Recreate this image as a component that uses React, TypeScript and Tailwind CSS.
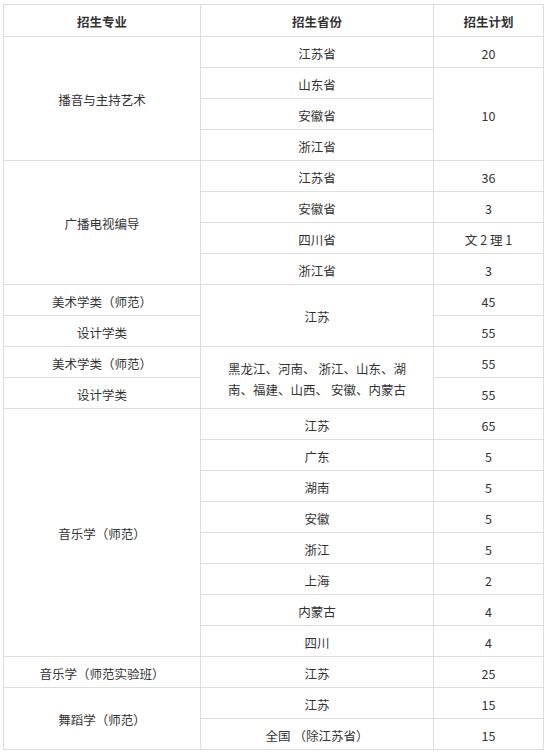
import React from "react"

type Cell = { text: string; rowSpan?: number; bold?: boolean }
type Row = Cell[]

const rows: Row[] = [
    [{ text: "播音与主持艺术", rowSpan: 4 }, { text: "江苏省" }, { text: "20" }],
    [{ text: "山东省" }, { text: "10", rowSpan: 3 }],
    [{ text: "安徽省" }],
    [{ text: "浙江省" }],
    [{ text: "广播电视编导", rowSpan: 4 }, { text: "江苏省" }, { text: "36" }],
    [{ text: "安徽省" }, { text: "3" }],
    [{ text: "四川省" }, { text: "文 2 理 1" }],
    [{ text: "浙江省" }, { text: "3" }],
    [{ text: "美术学类（师范）" }, { text: "江苏", rowSpan: 2 }, { text: "45" }],
    [{ text: "设计学类" }, { text: "55" }],
    [{ text: "美术学类（师范）" }, { text: "黑龙江、河南、 浙江、山东、湖南、福建、山西、 安徽、内蒙古", rowSpan: 2 }, { text: "55" }],
    [{ text: "设计学类" }, { text: "55" }],
    [{ text: "音乐学（师范）", rowSpan: 8 }, { text: "江苏" }, { text: "65" }],
    [{ text: "广东" }, { text: "5" }],
    [{ text: "湖南" }, { text: "5" }],
    [{ text: "安徽" }, { text: "5" }],
    [{ text: "浙江" }, { text: "5" }],
    [{ text: "上海" }, { text: "2" }],
    [{ text: "内蒙古" }, { text: "4" }],
    [{ text: "四川" }, { text: "4" }],
    [{ text: "音乐学（师范实验班）" }, { text: "江苏" }, { text: "25" }],
    [{ text: "舞蹈学（师范）", rowSpan: 2 }, { text: "江苏" }, { text: "15" }],
    [{ text: "全国 （除江苏省）" }, { text: "15" }],
]

export default function App() {
    return (
        <div className="w-[548px] h-[754px] bg-white pt-[4px] pl-[3px]" style={{ fontFamily: '"Noto Sans CJK SC", "Noto Sans", sans-serif' }}>
            <table className="table-fixed border-collapse text-[12.5px] text-[#333] w-[540px]">
                <colgroup>
                    <col className="w-[197px]" />
                    <col className="w-[233px]" />
                    <col className="w-[110px]" />
                </colgroup>
                <thead>
                    <tr>
                        {["招生专业", "招生省份", "招生计划"].map((h) => (
                            <th key={h} className="h-[32px] border border-[#dddddd] font-bold text-center align-middle pt-[3px] p-0">
                                {h}
                            </th>
                        ))}
                    </tr>
                </thead>
                <tbody>
                    {rows.map((row, i) => (
                        <tr key={i}>
                            {row.map((cell, j) => (
                                <td
                                    key={j}
                                    rowSpan={cell.rowSpan}
                                    className="h-[31px] border border-[#dddddd] text-center align-middle p-0 pt-[2px] px-[20px] leading-[21px]"
                                >
                                    {cell.text}
                                </td>
                            ))}
                        </tr>
                    ))}
                </tbody>
            </table>
        </div>
    )
}
